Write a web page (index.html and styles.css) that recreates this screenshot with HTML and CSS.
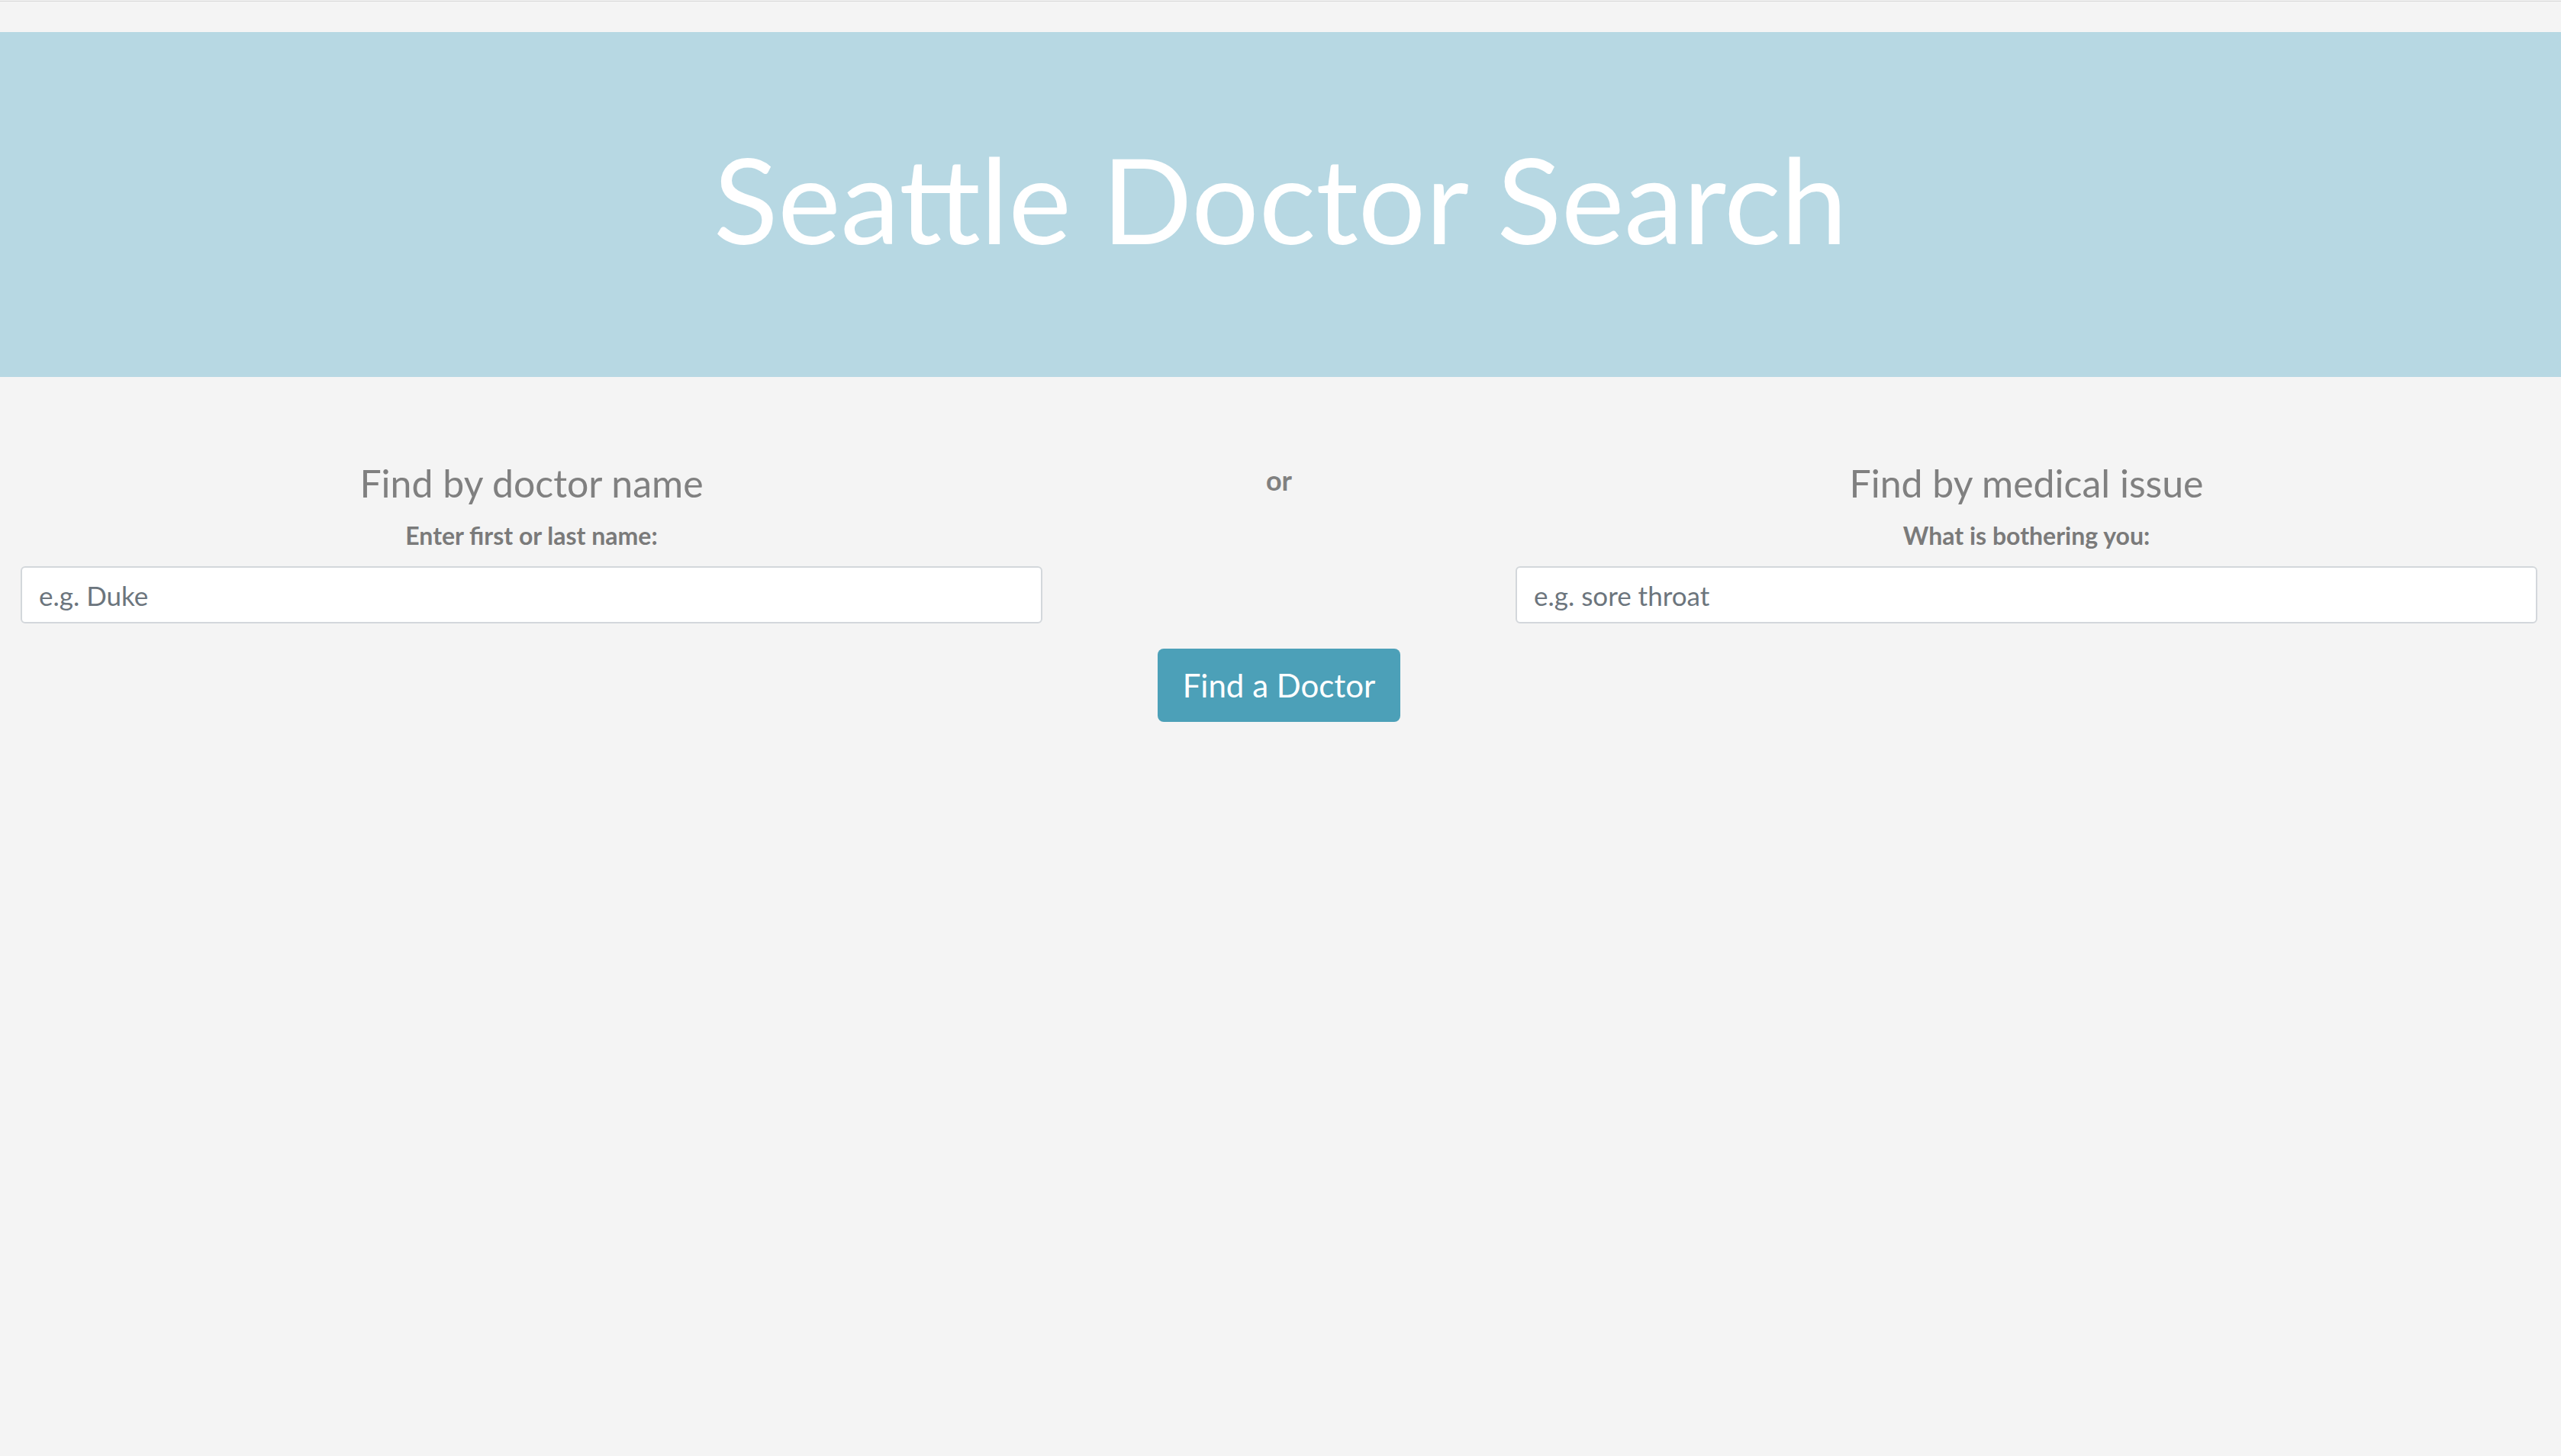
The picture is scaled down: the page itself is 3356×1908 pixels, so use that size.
FILE: index.html
```html
<!DOCTYPE html>
<html lang="en">
<head>
<meta charset="utf-8">
<title>Seattle Doctor Search</title>
<link rel="stylesheet" href="styles.css">
</head>
<body>
<div class="topline"></div>
<header class="banner">
  <h1 class="title">Seattle Doctor Search</h1>
</header>
<main class="search">
  <div class="fields">
    <div class="field">
      <h2 class="field-title">Find by doctor name</h2>
      <label class="field-label" for="name">Enter first or last name:</label>
      <input class="field-input" id="name" type="text" placeholder="e.g. Duke">
    </div>
    <div class="divider">or</div>
    <div class="field">
      <h2 class="field-title">Find by medical issue</h2>
      <label class="field-label" for="issue">What is bothering you:</label>
      <input class="field-input" id="issue" type="text" placeholder="e.g. sore throat">
    </div>
  </div>
  <div class="actions">
    <button class="find-btn" type="button">Find a Doctor</button>
  </div>
</main>
</body>
</html>
```
FILE: styles.css
```css
html, body {
  margin: 0;
  padding: 0;
}
body {
  background: #f4f4f4;
  font-family: Lato, "Open Sans", "Liberation Sans", sans-serif;
  min-height: 1908px;
}
.topline {
  height: 1px;
  margin-top: 1px;
  background: #d6d6d6;
}
.banner {
  margin-top: 40px;
  background: #b7d8e3;
  padding: 140px 0 156px;
  text-align: center;
}
.title {
  margin: 0;
  font-size: 156px;
  line-height: 156px;
  font-weight: 400;
  color: #ffffff;
}
.search {
  padding: 0 31px 0 27px;
}
.fields {
  display: grid;
  grid-template-columns: 1fr 620px 1fr;
  padding-top: 114px;
}
.field {
  display: flex;
  flex-direction: column;
  align-items: center;
}
.field-title {
  margin: 0;
  font-size: 50px;
  line-height: 50px;
  font-weight: 400;
  color: #808080;
}
.field-label {
  margin-top: 28px;
  font-size: 32px;
  line-height: 32px;
  font-weight: 700;
  color: #7a7a7a;
}
.field-input {
  box-sizing: border-box;
  margin-top: 24px;
  width: 100%;
  height: 75px;
  border: 2px solid #d3d7db;
  border-radius: 6px;
  background: #ffffff;
  padding: 0 22px;
  font-family: inherit;
  font-size: 35px;
  color: #555;
  outline: none;
}
.field-input::placeholder {
  color: #6c757d;
  opacity: 1;
}
.divider {
  text-align: center;
  padding-top: 3px;
  font-size: 36px;
  line-height: 36px;
  font-weight: 700;
  color: #808080;
}
.actions {
  display: flex;
  justify-content: center;
  margin-top: 33px;
}
.find-btn {
  height: 96px;
  padding: 0 33px;
  border: none;
  border-radius: 8px;
  background: #4ca0b8;
  color: #ffffff;
  font-family: inherit;
  font-size: 42px;
  font-weight: 400;
  cursor: pointer;
}
```
